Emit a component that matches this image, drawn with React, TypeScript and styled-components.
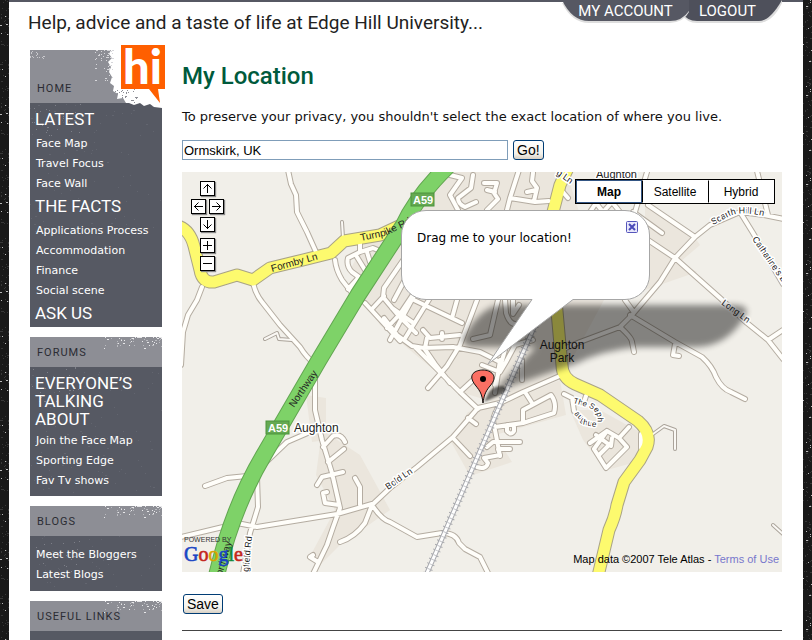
import React from "react";
import styled, { createGlobalStyle, css } from "styled-components";

const display = `Roboto, "Liberation Sans", sans-serif`;
const verdana = `"DejaVu Sans", Verdana, sans-serif`;
const arial = `"Liberation Sans", Arial, sans-serif`;

const Global = createGlobalStyle`
  *, *::before, *::after { box-sizing: border-box; }
  body { margin: 0; background: #191919; color: #111; font: 13px/20px ${verdana}; }
  a { text-decoration: none; }
`;

const Page = styled.div`
  position: relative;
  display: flex;
  flex-direction: column;
  min-height: 100vh;
  padding: 0 9px;
`;

const EdgeGrain = styled.svg<{ $side: "left" | "right" }>`
  position: absolute;
  top: 0;
  ${(p) => p.$side}: 0;
  width: 9px;
  height: 100%;
`;

const Sheet = styled.div`
  flex: 1;
  display: flex;
  flex-direction: column;
  background: #fff;
  border-top: 2px solid #565863;
`;

const Header = styled.header`
  display: flex;
  justify-content: space-between;
  align-items: flex-start;
  height: 48px;
  padding: 0 21px 0 19px;
`;

const Tagline = styled.div`
  padding-top: 9px;
  font: 400 19px/24px ${display};
  color: #222;
  white-space: nowrap;
`;

const Tabs = styled.nav`
  display: flex;
`;

const Tab = styled.a<{ $width: number; $overlap?: boolean }>`
  position: relative;
  width: ${(p) => p.$width}px;
  height: 24px;
  margin-left: ${(p) => (p.$overlap ? "-8px" : "0")};
  padding-right: ${(p) => (p.$overlap ? "8px" : "0")};
  z-index: ${(p) => (p.$overlap ? 0 : 1)};
  font: 400 15px/18px ${display};
  color: #fff;
  text-align: center;
  span { position: relative; }
  svg { position: absolute; left: 0; top: -2px; overflow: visible; }
`;

const Columns = styled.div`
  flex: 1;
  display: flex;
  gap: 20px;
  padding: 0 21px;
`;

const Sidebar = styled.aside`
  flex: 0 0 132px;
  display: flex;
  flex-direction: column;
  gap: 10px;
`;

const Block = styled.section<{ $grow?: boolean }>`
  position: relative;
  flex: ${(p) => (p.$grow ? "1 0 39px" : "none")};
  background: #565963;
  color: #fff;
`;

const BlockTitle = styled.h2<{ $tall?: boolean }>`
  position: relative;
  display: flex;
  align-items: flex-end;
  height: ${(p) => (p.$tall ? 53 : 30)}px;
  margin: 0;
  padding: 0 7px 6px;
  background: #8d8e95;
  color: #2b2c33;
  font: 400 11px/16px ${display};
  letter-spacing: 1px;
  overflow: hidden;
  span { position: relative; }
`;

const Grain = styled.svg`
  position: absolute;
  left: 0;
  top: 0;
  width: 132px;
  height: 100%;
  pointer-events: none;
`;

const BlockBody = styled.div<{ $top?: number; $bottom?: number }>`
  position: relative;
  padding: ${(p) => p.$top ?? 3}px 0 ${(p) => p.$bottom ?? 0}px 5px;
`;

const Topic = styled.a<{ $stacked?: boolean }>`
  position: relative;
  display: block;
  padding: ${(p) => (p.$stacked ? "4px 0 3px" : "4px 0 6px")};
  font: 400 17px/18px ${display};
  color: #fff;
  &:last-child { padding-bottom: 5px; }
`;

const Links = styled.ul`
  position: relative;
  margin: 0;
  padding: 0 0 0 1px;
  list-style: none;
  font: 11px/20px ${verdana};
  li { height: 20px; }
  li + li:last-child { height: 19px; }
  a { color: #fff; white-space: nowrap; }
`;

const Logo = styled.svg`
  position: absolute;
  left: 91px;
  top: -5px;
  z-index: 2;
  overflow: visible;
`;

const Main = styled.main`
  flex: 1;
  min-width: 0;
`;

const Title = styled.h1`
  margin: 0;
  padding-top: 12px;
  font: 500 24px/28px ${display};
  color: #005a3c;
`;

const Intro = styled.p`
  margin: 17px 0 13px;
  line-height: 20px;
`;

const SearchForm = styled.form`
  display: flex;
  gap: 5px;
  margin-bottom: 12px;
`;

const SearchInput = styled.input`
  flex: 0 1 326px;
  min-width: 0;
  height: 20px;
  padding: 0 1px;
  border: 1px solid #7f9db9;
  border-radius: 0;
  font: 13px/18px ${arial};
  color: #000;
  outline: none;
`;

const PushButton = styled.button`
  height: 20px;
  padding: 0 3px;
  border: 1px solid #003c74;
  border-radius: 3px;
  background: linear-gradient(#fff, #f3f2ec 70%, #d8d0c4);
  font: 14px/18px ${arial};
  color: #000;
`;

const Footer = styled.div`
  margin: 22px 0 0;
  padding: 0 1px 16px;
  border-bottom: 1px solid #444;
  display: flex;
`;

const MapFrame = styled.section`
  position: relative;
  height: 400px;
  overflow: hidden;
  background: #f1efe9;
  font-family: ${arial};
`;

const MapDrawing = styled.svg`
  display: block;
  width: 100%;
  height: 100%;
`;

const MapLabel = styled.text<{ $size?: number; $halo?: boolean }>`
  font-family: ${arial};
  font-size: ${(p) => p.$size ?? 10}px;
  fill: #222;
  ${(p) =>
    p.$halo &&
    css`
      paint-order: stroke;
      stroke: #fff;
      stroke-width: 3px;
      stroke-linejoin: round;
    `}
`;

const Shield = styled.text`
  font: 700 11px ${arial};
  fill: #fff;
`;

const PanControls = styled.div`
  position: absolute;
  left: 9px;
  top: 9px;
  display: flex;
  flex-direction: column;
  align-items: center;
  gap: 3px;
`;

const PanRow = styled.div`
  display: flex;
  gap: 3px;
`;

const ZoomControls = styled(PanRow)`
  flex-direction: column;
  margin-top: 3px;
`;

const MapButton = styled.button`
  width: 15px;
  height: 15px;
  padding: 0;
  border: 1px solid #000;
  background: #fff;
  box-shadow: 1px 1px 1px #888;
  svg { display: block; }
`;

const TypeSwitch = styled.div`
  position: absolute;
  top: 7px;
  right: 7px;
  display: flex;
  border: 1px solid #000;
`;

const TypeButton = styled.button<{ $active?: boolean }>`
  width: 66px;
  height: 23px;
  padding: 0;
  border: 1px solid ${(p) => (p.$active ? "#345684" : "#fff")};
  border-left-color: ${(p) => (p.$active ? "#345684" : "#000")};
  background: #fff;
  color: #000;
  font: ${(p) => (p.$active ? 700 : 400)} 12px/20px ${arial};
`;

const Bubble = styled.div`
  position: absolute;
  left: 219px;
  top: 38px;
  width: 249px;
  height: 90px;
  padding: 18px 11px 0 16px;
  font: 12px/20px ${verdana};
  color: #000;
`;

const CloseButton = styled.button`
  position: absolute;
  right: 12px;
  top: 11px;
  width: 12px;
  height: 12px;
  padding: 0;
  border: 0;
  background: transparent;
  svg { display: block; }
`;

const Credit = styled.div`
  position: absolute;
  right: 3px;
  bottom: 5px;
  font: 11px/16px ${arial};
  color: #000;
  a { color: #7777cc; }
`;

const PoweredBy = styled.div`
  position: absolute;
  left: 2px;
  bottom: 8px;
  font: 400 7px/9px ${arial};
  color: #333;
`;

const GoogleMark = styled.div`
  font: 400 20px/20px "Liberation Serif", serif;
  -webkit-text-stroke: 0.6px currentColor;
`;

const Letter = styled.span<{ $color: string }>`
  color: ${(p) => p.$color};
`;

/* Repeatable scatter of small specks used for the worn print texture. */
function specks(seed: number, count: number, width: number, height: number, bias = 1) {
  let s = seed;
  const next = () => {
    s = (s * 16807) % 2147483647;
    return s / 2147483647;
  };
  next();
  return Array.from({ length: count }, () => {
    const x = Math.round((1 - Math.pow(next(), bias)) * width);
    const y = Math.round(Math.pow(next(), bias) * height);
    const r = next() > 0.85 ? 2 : 1;
    return `M${x} ${y}h${r}v1h-${r}z`;
  }).join("");
}

function EdgeStrip({ side }: { side: "left" | "right" }) {
  const id = `edge-${side}`;
  const seed = side === "left" ? 421 : 977;
  return (
    <EdgeGrain $side={side} aria-hidden="true">
      <defs>
        <pattern id={id} width="9" height="89" patternUnits="userSpaceOnUse">
          <path d={specks(seed, 40, 9, 89)} fill="#383838" />
          <path d={specks(seed + 5, 9, 9, 89)} fill="#bbb" />
        </pattern>
      </defs>
      <rect width="9" height="100%" fill={`url(#${id})`} />
    </EdgeGrain>
  );
}

function HeadGrain() {
  return (
    <Grain aria-hidden="true">
      <g transform="translate(72 0)">
        <path d={specks(77, 42, 60, 11, 1.9)} fill="#fff" opacity=".8" />
        <path d={specks(178, 26, 60, 9, 1.6)} fill="#b9babf" />
      </g>
    </Grain>
  );
}

function BodyGrain({ seed }: { seed: number }) {
  return (
    <Grain aria-hidden="true">
      <path d={specks(seed, 90, 132, 130)} fill="#62656f" />
      <path d={specks(seed + 9, 26, 50, 38)} fill="#7d7f88" />
    </Grain>
  );
}

function LinkList({ items }: { items: string[] }) {
  return (
    <Links>
      {items.map((t) => (
        <li key={t}>
          <a href="#">{t}</a>
        </li>
      ))}
    </Links>
  );
}

const streets = [
  "M288 170L291 184L296 195L297 212L307 232L316 252",
  "M202 287L197 300L188 315L183 332L181 365",
  "M253 283Q256 295 262 302L280 325L300 347Q306 357 315 364",
  "M335 260Q336 270 342 280L352 293",
  "M360 243V252L348 258Q346 266 352 272L359 277L348 289",
  "M360 252L373 248L385 253",
  "M367 252L370 262L378 268",
  "M357 257L365 270M358 277L352 291",
  "M406 256L384 288L383 297L398 315L416 333",
  "M365 303L400 341",
  "M372 309L384 296M387 328L400 314L420 284",
  "M394 300L410 270L418 262",
  "M415 294L390 340M430 298L404 340M392 308L412 322",
  "M384 318L397 335L412 346L424 348L435 364L450 383",
  "M414 300L462 323M457 300L452 318",
  "M477 300L460 345L447 366L428 388",
  "M423 330L430 338L460 335M425 348L427 338M442 333V339",
  "M423 348L453 347L480 352L500 362",
  "M498 300L490 335L473 339",
  "M505 300L506 313Q510 326 518 324L526 318",
  "M513 300V314L519 305M533 340L515 345L506 362L500 372",
  "M450 175L462 178L450 195L458 210",
  "M473 175L471 188L458 198Q458 204 465 207L476 202",
  "M484 183H497L494 193L498 199L487 210M487 190L495 192",
  "M507 210L510 198L519 170M510 198L535 202L549 201",
  "M533 173L532 181L537 188L534 201M527 192L536 190",
  "M562 191L568 198",
  "M648 205L695 237M647 172L635 212M633 212L662 233",
  "M590 212L596 203L603 212L612 202L620 212",
  "M784 219L764 215L740 212L710 225L695 237L675 258L660 282L632 315L620 327L580 342L561 350",
  "M648 240L675 258L720 298L747 323L768 340L783 359",
  "M768 340L783 330M768 215L757 171",
  "M740 212L753 233L783 284",
  "M620 327Q632 338 632 342L634 352",
  "M630 315L675 342L702 357Q712 366 716 377Q722 389 731 392L745 399",
  "M675 344L673 355L679 356M625 300L633 311",
  "M562 375L523 392L500 403L478 408L453 437L417 467L390 488L372 505",
  "M415 347L428 360L460 392L478 409M460 392L473 380",
  "M500 360L495 393M505 350L495 385M482 365L500 372M522 360V380",
  "M500 405Q491 418 494 425L500 456",
  "M495 427L523 423L554 413Q557 403 551 395L523 410V423M525 392L532 403",
  "M507 425V431Q511 436 514 431V426",
  "M487 447L493 442L520 442M510 449H498L500 455L484 458L488 463Q486 470 477 467",
  "M453 438L470 456M468 418L476 424",
  "M372 505Q382 520 390 522L417 537L442 533Q456 533 459 543L465 549L480 557L488 573",
  "M315 378V410L322 440L332 473L340 508Q333 527 327 545L313 574",
  "M265 463L287 442L310 432",
  "M205 486L227 478L247 476",
  "M257 477L258 507L250 533L243 574",
  "M181 537L223 527L237 523L257 527L337 514L372 504",
  "M323 447L333 436Q341 433 345 442M328 462L344 449",
  "M317 485L322 477L343 472M339 505L325 503L323 493L327 492",
  "M360 505V487L355 478M372 505L365 523Q355 537 340 542",
  "M318 562L310 557L313 555",
  "M564 394L572 398L574 411M584 402L586 396",
  "M629 427L619 438L607 431L590 443M607 431L594 449L606 468L627 447L619 438M596 435L611 446L612 438M600 454L611 443M641 434V448",
];

const paths = [
  "M342 222L343 238",
  "M265 339L277 333L279 339L292 340",
  "M653 434L664 426L675 430L675 449",
  "M773 525L783 534",
  "M181 330V365",
];

const yellow = [
  "M178 226Q190 230 194 246L200 270Q202 283 214 282L237 275L253 280L270 268L303 260L331 253L344 241L380 235L412 220",
  "M568 168L560 185L553 212L556 300L560 345L562 365Q562 378 575 384L600 395L638 421Q652 433 647 447L640 460L624 482L617 505Q615 517 609 530L598 576",
];

const green = "M448 166Q417 196 403 226L358 295L319 360L265 453Q232 508 216 578";
const rail = "M547 298L500 405L427 573";

function Roads() {
  return (
    <>
      <g fill="#ebe6dd">
        <path d="M442 171H566L580 215L640 215L604 300L562 378L500 404L460 392L380 325L350 270L367 238L402 222Z" />
        <path d="M645 205L690 230L700 245L680 262L697 272L645 290Z" />
        <path d="M468 412L500 405L560 380L566 415L495 435L512 462L470 476L450 440Z" />
        <path d="M322 430L360 455L390 510L340 545L320 565L308 560L335 510L316 475Z" />
        <path d="M306 395L326 398V440L312 442Z" />
        <path d="M570 410L600 410L645 435L636 462L607 470L583 440Z" />
      </g>
      <g fill="none" strokeLinejoin="round" strokeLinecap="round">
        <path d={streets.join("")} stroke="#b4aca1" strokeWidth="6" />
        <path d={paths.join("")} stroke="#aaa39a" strokeWidth="4" />
        <path d={yellow.join("")} stroke="#a9a386" strokeWidth="13" />
        <path d={streets.join("")} stroke="#fffefa" strokeWidth="4" />
        <path d={paths.join("")} stroke="#faf8f4" strokeWidth="2" />
        <path d={rail} stroke="#a7a8ad" strokeWidth="8" strokeDasharray="1 4" strokeLinecap="butt" />
        <path d={rail} stroke="#a7a8ad" strokeWidth="5" />
        <path d={rail} stroke="#fff" strokeWidth="3" />
        <path d={rail} stroke="#c7c8cc" strokeWidth="3" strokeDasharray="1 4" strokeLinecap="butt" />
        <path d={yellow.join("")} stroke="#fdfa6e" strokeWidth="11" />
        <path d={green} stroke="#62a551" strokeWidth="17" />
        <path d={green} stroke="#7ed268" strokeWidth="15" />
      </g>
    </>
  );
}

function Labels() {
  return (
    <>
      <defs>
        <path id="formby" d="M272 272L330 256" />
        <path id="turnpike" d="M361 241L385 236L420 219" />
        <path id="scarth" d="M713 225L730 216Q742 210 772 218" />
        <path id="catharine" d="M752 239L792 297" />
        <path id="long" d="M721 304L762 334" />
        <path id="bold" d="M388 490L424 465" />
        <path id="northway" d="M294 408L324 364" />
        <path id="northway-south" d="M222 576L235 530" />
        <path id="springfield" d="M248 577L254 515" />
        <path id="seph" d="M573 403L590 408Q600 413 597 424" />
        <path id="aughue" d="M574 414L585 425L600 428" />
      </defs>
      <rect x="411" y="193" width="23" height="13" fill="#65a952" stroke="#4c933c" />
      <Shield x="413" y="204">A59</Shield>
      <rect x="266" y="421" width="23" height="13" fill="#65a952" stroke="#4c933c" />
      <Shield x="268" y="432">A59</Shield>
      <MapLabel><textPath href="#formby">Formby Ln</textPath></MapLabel>
      <MapLabel><textPath href="#turnpike">Turnpike Rd</textPath></MapLabel>
      <MapLabel $size={9} $halo><textPath href="#scarth">Scarth Hill Ln</textPath></MapLabel>
      <MapLabel $size={9} $halo><textPath href="#catharine">Catharine's Ln</textPath></MapLabel>
      <MapLabel $size={9} $halo><textPath href="#long">Long Ln</textPath></MapLabel>
      <MapLabel $size={9} $halo><textPath href="#bold">Bold Ln</textPath></MapLabel>
      <MapLabel><textPath href="#northway">Northway</textPath></MapLabel>
      <MapLabel><textPath href="#northway-south">orthway</textPath></MapLabel>
      <MapLabel $size={9} $halo><textPath href="#springfield">ngfield Rd</textPath></MapLabel>
      <MapLabel $size={8} $halo><textPath href="#aughue">aughue</textPath></MapLabel>
      <MapLabel $size={8} $halo><textPath href="#seph">The Seph</textPath></MapLabel>
      <MapLabel x="556" y="174" $size={9} $halo transform="rotate(35 556 174)">g Ln</MapLabel>
      <MapLabel x="596" y="178" $size={11} $halo>Aughton</MapLabel>
      <MapLabel x="294" y="432" $size={12} $halo>Aughton</MapLabel>
      <MapLabel x="562" y="349" $size={12} textAnchor="middle">Aughton</MapLabel>
      <MapLabel x="562" y="362" $size={12} textAnchor="middle">Park</MapLabel>
    </>
  );
}

function MarkerAndBalloon() {
  return (
    <>
      <defs>
        <filter id="soft" x="-10%" y="-20%" width="120%" height="140%">
          <feGaussianBlur stdDeviation="3" />
        </filter>
        <filter id="soft-pin" x="-40%" y="-40%" width="180%" height="180%">
          <feGaussianBlur stdDeviation="1" />
        </filter>
      </defs>
      <path
        d="M500 305H733Q751 305 745 316Q728 346 696 347H638Q602 350 575 364L493 392L536 347H474Q456 346 466 333Q482 307 500 305Z"
        fill="#000" opacity=".45" filter="url(#soft)"
      />
      <path d="M484 402L489 392Q494 385 504 386Q510 391 498 396Z" fill="#000" opacity=".55" filter="url(#soft-pin)" />
      <path
        d="M426 210.500H625A24.500 24.500 0 0 1 649.500 235V275A24.500 24.500 0 0 1 625 299.500H573L488 364L532 299.500H426A24.500 24.500 0 0 1 401.500 275V235A24.500 24.500 0 0 1 426 210.500Z"
        fill="#fff" stroke="#a6a6a6"
      />
      <path
        d="M483 403C482 394 480 391 476 386C466 374 476 370 483 370C491 370 499 376 490 386C485 392 484 396 483 403Z"
        fill="#fb7064" stroke="#111"
      />
      <circle cx="483" cy="379" r="3" fill="#000" />
    </>
  );
}

function ControlIcon({ d }: { d: string }) {
  return (
    <svg width="13" height="13" viewBox="0 0 13 13" aria-hidden="true">
      <path d={d} fill="none" stroke="#000" />
    </svg>
  );
}

function LocationMap() {
  return (
    <MapFrame aria-label="Map">
      <MapDrawing viewBox="182 172 600 400" preserveAspectRatio="xMinYMin slice">
        <Roads />
        <Labels />
        <MarkerAndBalloon />
      </MapDrawing>
      <PanControls>
        <MapButton aria-label="Pan up"><ControlIcon d="M6.500 11V2M2.500 6.500L6.500 2.500L10.500 6.500" /></MapButton>
        <PanRow>
          <MapButton aria-label="Pan left"><ControlIcon d="M11 6.500H2M6.500 2.500L2.500 6.500L6.500 10.500" /></MapButton>
          <MapButton aria-label="Pan right"><ControlIcon d="M2 6.500H11M6.500 2.500L10.500 6.500L6.500 10.500" /></MapButton>
        </PanRow>
        <MapButton aria-label="Pan down"><ControlIcon d="M6.500 2V11M2.500 6.500L6.500 10.500L10.500 6.500" /></MapButton>
        <ZoomControls>
          <MapButton aria-label="Zoom in"><ControlIcon d="M2 6.500H11M6.500 2V11" /></MapButton>
          <MapButton aria-label="Zoom out"><ControlIcon d="M2 6.500H11" /></MapButton>
        </ZoomControls>
      </PanControls>
      <TypeSwitch>
        <TypeButton $active>Map</TypeButton>
        <TypeButton>Satellite</TypeButton>
        <TypeButton>Hybrid</TypeButton>
      </TypeSwitch>
      <Bubble>
        Drag me to your location!
        <CloseButton aria-label="Close">
          <svg width="12" height="12" viewBox="0 0 12 12">
            <rect x=".5" y=".5" width="11" height="11" rx="1" fill="#e8e8fb" stroke="#5555bb" />
            <path d="M3 3L9 9M9 3L3 9" stroke="#4a4ab8" strokeWidth="2" />
          </svg>
        </CloseButton>
      </Bubble>
      <PoweredBy>
        POWERED BY
        <GoogleMark>
          <Letter $color="#1a45c4">G</Letter>
          <Letter $color="#c4261d">o</Letter>
          <Letter $color="#d8a400">o</Letter>
          <Letter $color="#1a45c4">g</Letter>
          <Letter $color="#12893a">l</Letter>
          <Letter $color="#c4261d">e</Letter>
        </GoogleMark>
      </PoweredBy>
      <Credit>
        Map data ©2007 Tele Atlas - <a href="#">Terms of Use</a>
      </Credit>
    </MapFrame>
  );
}

export default function App() {
  return (
    <>
      <Global />
      <Page>
        <EdgeStrip side="left" />
        <EdgeStrip side="right" />
        <Sheet>
          <Header>
            <Tagline>Help, advice and a taste of life at Edge Hill University...</Tagline>
            <Tabs>
              <Tab href="#" $width={127}>
                <svg width="127" height="24" aria-hidden="true">
                  <path d="M0 3Q10 23 27 23H108Q122 22 127 12V3Z" fill="#ddd" />
                  <path d="M0 0Q10 21 27 21H108Q120 21 127 11V0Z" fill="#565863" />
                </svg>
                <span>MY ACCOUNT</span>
              </Tab>
              <Tab href="#" $width={101} $overlap>
                <svg width="101" height="24" aria-hidden="true">
                  <path d="M0 14Q6 23 16 23H78Q92 22 101 3V0H0Z" fill="#ddd" />
                  <path d="M0 12Q6 21 16 21H78Q89 21 101 0H0Z" fill="#4e505b" />
                </svg>
                <span>LOGOUT</span>
              </Tab>
            </Tabs>
          </Header>
          <Columns>
            <Sidebar>
              <Block>
                <Logo width="46" height="60" viewBox="0 0 46 60" role="img" aria-label="hi">
                  <path d="M0 0H44V44H37L39 58L28 44H0Z" fill="#ff5f00" />
                  <text x="2" y="39" fontFamily="Lato, sans-serif" fontWeight="900" fontSize="47" fill="#fff">hi</text>
                </Logo>
                <BlockTitle $tall>
                  <Grain aria-hidden="true">
                    <path d="M81 0L79 4L82 8L78 12L81 17L79 22L82 27L80 33L84 36L83 41L88 44L87 49L93 48L96 53H132V0Z" fill="#fff" />
                    <g transform="translate(64 0)">
                      <path d={specks(61, 50, 18, 30, 1.8)} fill="#d6d6da" />
                    </g>
                    <path d={specks(91, 16, 14, 8)} fill="#c9c9cd" />
                    <g transform="translate(84 38)">
                      <path d={specks(43, 30, 24, 15)} fill="#8d8e95" />
                    </g>
                  </Grain>
                  <span>HOME</span>
                </BlockTitle>
                <BlockBody>
                  <BodyGrain seed={19} />
                  <Grain aria-hidden="true">
                    <path d="M99 0L104 2L110 0L114 3L120 1L124 4L132 5V0Z" fill="#fff" />
                  </Grain>
                  <Topic href="#">LATEST</Topic>
                  <LinkList items={["Face Map", "Travel Focus", "Face Wall"]} />
                  <Topic href="#">THE FACTS</Topic>
                  <LinkList items={["Applications Process", "Accommodation", "Finance", "Social scene"]} />
                  <Topic href="#">ASK US</Topic>
                </BlockBody>
              </Block>
              <Block>
                <BlockTitle><HeadGrain /><span>FORUMS</span></BlockTitle>
                <BlockBody $bottom={6}>
                  <BodyGrain seed={55} />
                  <Topic href="#" $stacked>EVERYONE’S TALKING ABOUT</Topic>
                  <LinkList items={["Join the Face Map", "Sporting Edge", "Fav Tv shows"]} />
                </BlockBody>
              </Block>
              <Block>
                <BlockTitle><HeadGrain /><span>BLOGS</span></BlockTitle>
                <BlockBody $top={9} $bottom={7}>
                  <BodyGrain seed={83} />
                  <LinkList items={["Meet the Bloggers", "Latest Blogs"]} />
                </BlockBody>
              </Block>
              <Block $grow>
                <BlockTitle><HeadGrain /><span>USEFUL LINKS</span></BlockTitle>
              </Block>
            </Sidebar>
            <Main>
              <Title>My Location</Title>
              <Intro>To preserve your privacy, you shouldn't select the exact location of where you live.</Intro>
              <SearchForm onSubmit={(e) => e.preventDefault()}>
                <SearchInput aria-label="Location" defaultValue="Ormskirk, UK" />
                <PushButton type="submit">Go!</PushButton>
              </SearchForm>
              <LocationMap />
              <Footer>
                <PushButton type="button">Save</PushButton>
              </Footer>
            </Main>
          </Columns>
        </Sheet>
      </Page>
    </>
  );
}
